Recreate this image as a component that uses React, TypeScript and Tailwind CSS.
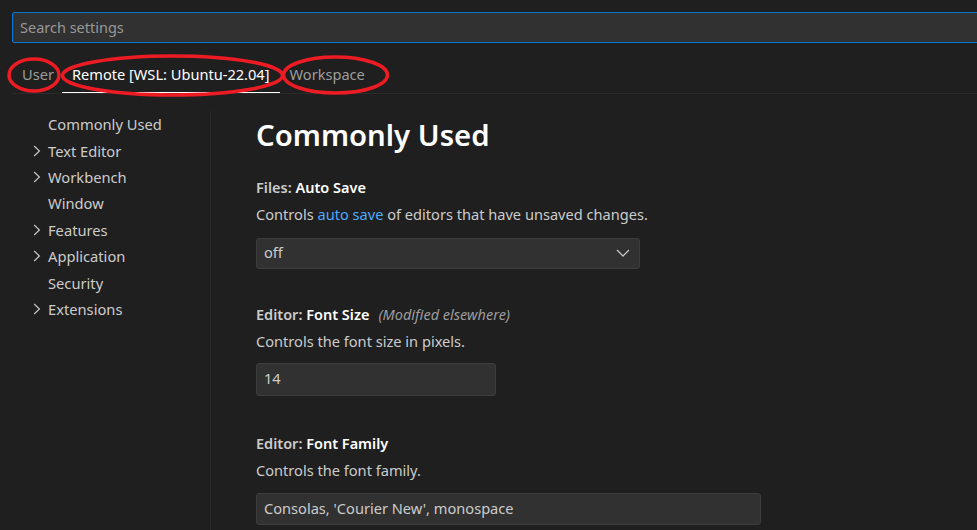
import React from "react";

const Chevron = () => (
  <svg width="8" height="12" viewBox="0 0 8 12" className="shrink-0">
    <path d="M1.2 1 L6.4 6 L1.2 11" fill="none" stroke="#c5c5c5" strokeWidth="1.2" />
  </svg>
);

const navItems: { label: string; chev: boolean }[] = [
  { label: "Commonly Used", chev: false },
  { label: "Text Editor", chev: true },
  { label: "Workbench", chev: true },
  { label: "Window", chev: false },
  { label: "Features", chev: true },
  { label: "Application", chev: true },
  { label: "Security", chev: false },
  { label: "Extensions", chev: true },
];

export default function App() {
  return (
    <div
      className="relative w-[977px] h-[530px] overflow-hidden bg-[#1f1f1f] text-[#cccccc]"
      style={{ fontFamily: '"Noto Sans", "Open Sans", sans-serif' }}
    >
      {/* search */}
      <div className="pt-[12px] pl-[12px]">
        <div className="w-[990px] h-[31px] border border-[#0078d4] bg-[#313131] rounded-[2px] flex items-center pl-[7px] text-[14.5px] text-[#989898]">
          Search settings
        </div>
      </div>

      {/* tabs */}
      <div className="mt-[14px] ml-[12px] h-[37px] border-b border-[#2b2b2b] flex text-[14.6px]">
        <div className="h-[36px] pl-[10px] pr-[8px] flex items-center text-[#9d9d9d]">User</div>
        <div className="h-[36px] px-[10px] flex items-center text-white border-b border-white">
          Remote [WSL: Ubuntu-22.04]
        </div>
        <div className="h-[36px] px-[10px] flex items-center text-[#9d9d9d]">Workspace</div>
      </div>

      {/* body */}
      <div className="mt-[17px] flex h-[500px]">
        <div className="w-[211px] shrink-0 border-r border-[#2b2b2b] text-[14.7px] text-[#cccccc]">
          {navItems.map((it) => (
            <div key={it.label} className="h-[26.4px] flex items-center pl-[33px]">
              <div className="w-[15px] flex items-center">{it.chev && <Chevron />}</div>
              <span>{it.label}</span>
            </div>
          ))}
        </div>

        <div className="pl-[45px] pt-[6px] flex-1">
          <div className="text-[29.3px] leading-[36px] font-semibold text-white">Commonly Used</div>

          <div className="mt-[21.5px] h-[27px] flex items-center text-[14.5px] font-semibold">
            <span className="text-[#cccccc]">Files:&nbsp;</span>
            <span className="text-white">Auto Save</span>
          </div>
          <div className="h-[27px] flex items-center text-[14.6px] text-[#cccccc]">
            Controls&nbsp;<span className="text-[#4daafc]">auto save</span>&nbsp;of editors that have unsaved changes.
          </div>
          <div className="mt-[9px] w-[384px] h-[31px] bg-[#313131] border border-[#3c3c3c] rounded-[3px] flex items-center justify-between pl-[7px] pr-[9px] text-[14.6px] text-[#cccccc]">
            <span>off</span>
            <svg width="14" height="8" viewBox="0 0 14 8">
              <path d="M1 1 L7 7 L13 1" fill="none" stroke="#c5c5c5" strokeWidth="1.3" />
            </svg>
          </div>

          <div className="mt-[32.5px] h-[27px] flex items-center text-[14.5px]">
            <span className="font-semibold text-[#cccccc]">Editor:&nbsp;</span>
            <span className="font-semibold text-white">Font Size</span>
            <span className="italic text-[#9d9d9d] ml-[9px]">(Modified elsewhere)</span>
          </div>
          <div className="h-[27px] flex items-center text-[14.6px] text-[#cccccc]">
            Controls the font size in pixels.
          </div>
          <div className="mt-[7.5px] w-[240px] h-[33px] bg-[#313131] border border-[#3c3c3c] rounded-[3px] flex items-center pl-[7px] text-[14.6px] text-[#cccccc]">
            14
          </div>

          <div className="mt-[34.5px] h-[27px] flex items-center text-[14.5px] font-semibold">
            <span className="text-[#cccccc]">Editor:&nbsp;</span>
            <span className="text-white">Font Family</span>
          </div>
          <div className="h-[27px] flex items-center text-[14.6px] text-[#cccccc]">
            Controls the font family.
          </div>
          <div className="mt-[8.5px] w-[505px] h-[32px] bg-[#313131] border border-[#3c3c3c] rounded-[3px] flex items-center pl-[7px] text-[14.6px] text-[#cccccc]">
            Consolas, 'Courier New', monospace
          </div>
        </div>
      </div>

      {/* red annotation ellipses */}
      <svg className="absolute left-0 top-0 pointer-events-none" width="977" height="530">
        <ellipse cx="34" cy="75" rx="25" ry="16" fill="none" stroke="#ed1c24" strokeWidth="3.5" />
        <ellipse cx="172.5" cy="75.5" rx="110" ry="19.5" fill="none" stroke="#ed1c24" strokeWidth="3.5" />
        <ellipse cx="335.5" cy="75" rx="52" ry="18" fill="none" stroke="#ed1c24" strokeWidth="3.5" />
      </svg>
    </div>
  );
}
